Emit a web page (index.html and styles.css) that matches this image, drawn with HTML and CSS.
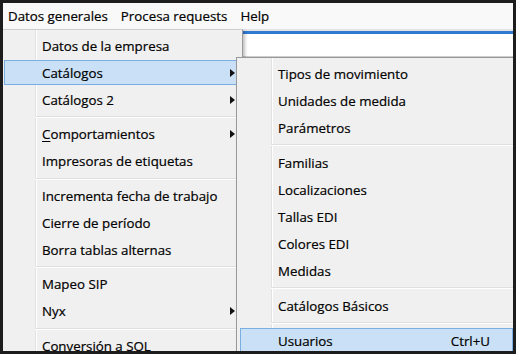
FILE: index.html
```html
<!DOCTYPE html>
<html lang="es">
<head>
<meta charset="utf-8">
<title>Menú</title>
<link rel="stylesheet" href="styles.css">
</head>
<body>
<div class="window">
  <div class="menubar">
    <span class="mb-item">Datos generales</span>
    <span class="mb-item">Procesa requests</span>
    <span class="mb-item">Help</span>
  </div>
  <div class="content">
    <div class="gap"></div>
    <div class="blue"></div>
    <div class="field"></div>
  </div>

  <div class="menu main">
    <div class="item">Datos de la empresa</div>
    <div class="item hot">Catálogos<span class="arrow"></span></div>
    <div class="item">Catálogos 2<span class="arrow"></span></div>
    <div class="sep"></div>
    <div class="item"><span><u>C</u>omportamientos</span><span class="arrow"></span></div>
    <div class="item">Impresoras de etiquetas</div>
    <div class="sep"></div>
    <div class="item">Incrementa fecha de trabajo</div>
    <div class="item">Cierre de período</div>
    <div class="item">Borra tablas alternas</div>
    <div class="sep"></div>
    <div class="item">Mapeo SIP</div>
    <div class="item">Nyx<span class="arrow"></span></div>
    <div class="sep"></div>
    <div class="item">Conversión a SQL</div>
  </div>

  <div class="menu sub">
    <div class="item">Tipos de movimiento</div>
    <div class="item">Unidades de medida</div>
    <div class="item">Parámetros</div>
    <div class="sep"></div>
    <div class="item">Familias</div>
    <div class="item">Localizaciones</div>
    <div class="item">Tallas EDI</div>
    <div class="item">Colores EDI</div>
    <div class="item">Medidas</div>
    <div class="sep"></div>
    <div class="item">Catálogos Básicos</div>
    <div class="sep"></div>
    <div class="item hot">Usuarios<span class="shortcut">Ctrl+U</span></div>
  </div>
</div>
</body>
</html>
```

FILE: styles.css
```css
* { box-sizing: border-box; }
html, body { margin: 0; padding: 0; }
body {
  width: 516px;
  height: 354px;
  padding: 3px;
  background: #1d1d1d;
  font-family: "Open Sans", "Noto Sans", sans-serif;
  font-size: 13.3px;
  color: #000;
  -webkit-text-stroke: 0.2px #000;
  overflow: hidden;
}
.window {
  position: relative;
  width: 510px;
  height: 348px;
  background: #f0f0f0;
  overflow: hidden;
}
.menubar {
  height: 26px;
  display: flex;
  align-items: center;
  gap: 13px;
  padding-left: 5px;
  background: #f9f9f9;
}
.mb-item { white-space: nowrap; }
.content .gap { height: 2px; background: #e4e4e4; }
.content .blue { height: 3px; background: #2f7ad3; }
.content .field { height: 23px; background: #fff; border-bottom: 1px solid #d0d0d0; }

.menu {
  position: absolute;
  display: flex;
  flex-direction: column;
  box-shadow: 2px 2px 3px rgba(0, 0, 0, 0.25);
}
.menu.main {
  left: 0;
  top: 26px;
  width: 240px;
  border-top: 1px solid #cfcfcf;
  border-right: 1px solid #999;
  padding: 2px 3px 2px 1px;
  background:
    linear-gradient(to right, transparent 32px, #e2e2e2 32px, #e2e2e2 33px, #fff 33px, #fff 34px, transparent 34px),
    #f0f0f0;
}
.menu.sub {
  left: 233px;
  top: 54px;
  width: 281px;
  border: 1px solid #999;
  padding: 2px 3px;
  background:
    linear-gradient(to right, transparent 34px, #e2e2e2 34px, #e2e2e2 35px, #fff 35px, #fff 36px, transparent 36px),
    #f0f0f0;
}
.item {
  height: 25px;
  flex: none;
  margin: 1px 0;
  display: flex;
  align-items: center;
  padding-left: 37px;
  border: 1px solid transparent;
  white-space: nowrap;
}
.item.hot {
  background: #c9e0f6;
  border-color: #7aafe4;
}
.item u { text-decoration-thickness: 1px; text-underline-offset: 2px; }
.arrow {
  margin-left: auto;
  margin-right: 3px;
  width: 0;
  height: 0;
  border-left: 5px solid #111;
  border-top: 4px solid transparent;
  border-bottom: 4px solid transparent;
}
.shortcut {
  margin-left: auto;
  margin-right: 22px;
}
.sep {
  height: 8px;
  flex: none;
  margin-left: 31px;
  background:
    linear-gradient(#e0e0e0, #e0e0e0) 0 3px / 100% 1px no-repeat,
    linear-gradient(#fff, #fff) 0 4px / 100% 1px no-repeat;
}
.main .sep { height: 7.5px; }
```
